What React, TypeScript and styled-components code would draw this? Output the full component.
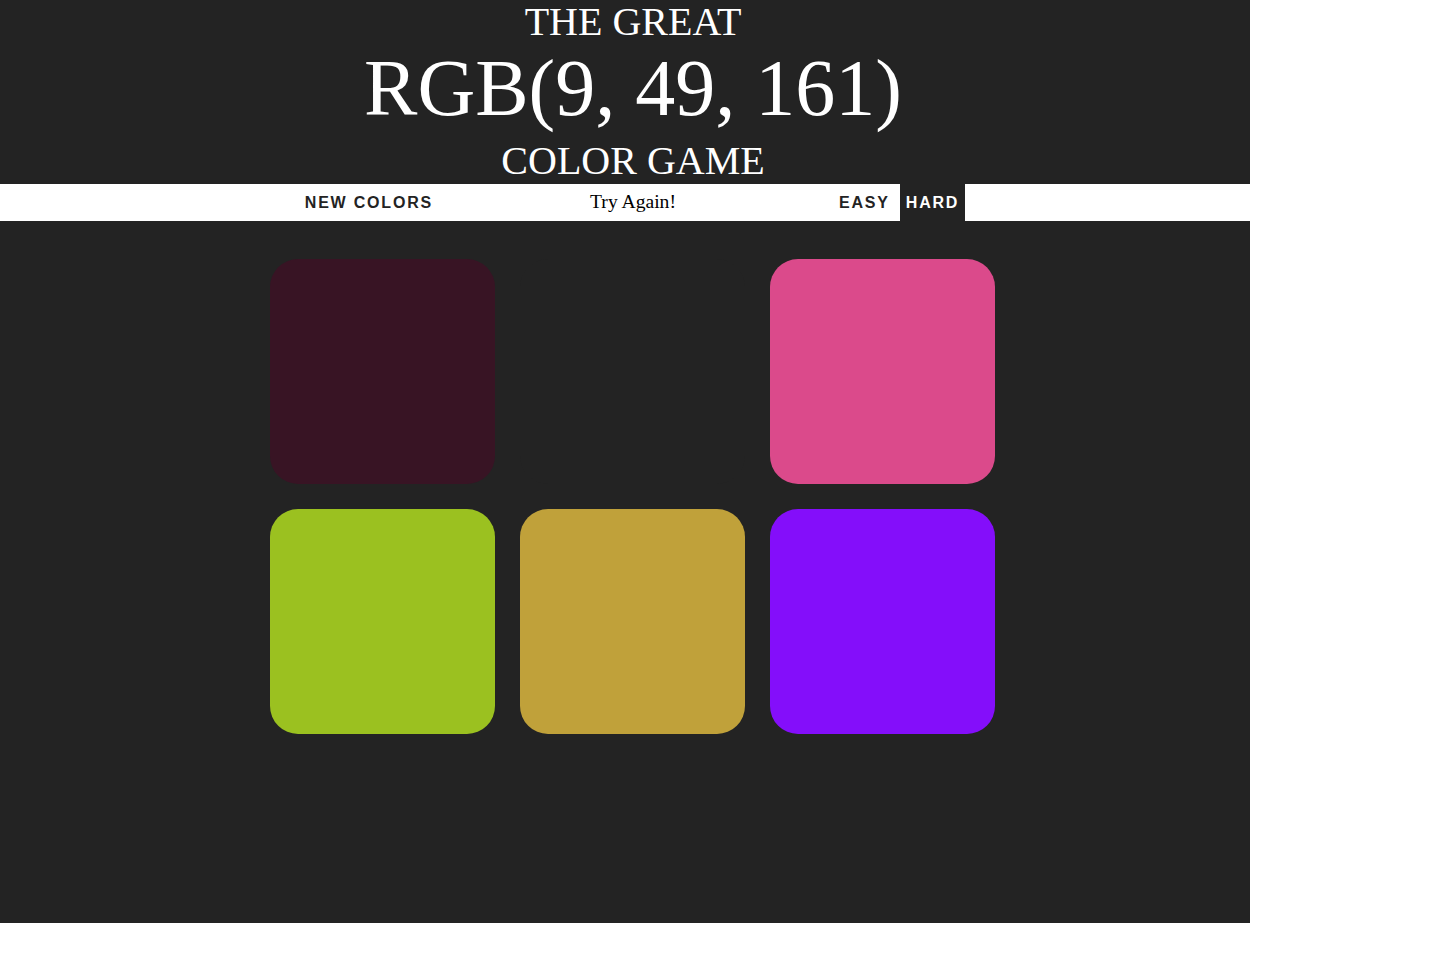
import React from 'react';
import styled, { createGlobalStyle } from 'styled-components';

const GlobalStyle = createGlobalStyle`
  html, body {
    margin: 0;
    padding: 0;
    background: #fff;
  }
`;

const squares: string[] = [
  'rgb(56, 20, 36)',
  '#232323',
  'rgb(219, 74, 139)',
  'rgb(155, 193, 32)',
  'rgb(192, 161, 58)',
  'rgb(132, 14, 250)',
];

const App = () => {
  return (
    <>
      <GlobalStyle />
      <Page>
        <Title>
          <TitleLine>THE GREAT</TitleLine>
          <ColorDisplay>RGB(9, 49, 161)</ColorDisplay>
          <TitleLine className="last">COLOR GAME</TitleLine>
        </Title>
        <Stripe>
          <Inner>
            <Button>New Colors</Button> <Message>Try Again!</Message>{' '}
            <Button>Easy</Button> <Button selected>Hard</Button>
          </Inner>
        </Stripe>
        <Container>
          {squares.map((color, i) => (
            <Square key={i} style={{ background: color }} />
          ))}
        </Container>
      </Page>
    </>
  );
};

const Page = styled.div`
  width: 1250px;
  height: 923px;
  background: #232323;
  overflow: hidden;
  font-family: 'Liberation Serif', 'Times New Roman', serif;
`;

const Title = styled.h1`
  margin: 0;
  padding: 0 0 1px 16px;
  font-weight: normal;
  color: #fff;
  text-align: center;
  font-size: 40px;
`;

const TitleLine = styled.div`
  line-height: 44px;
  &.last {
    margin-top: 7px;
  }
`;

const ColorDisplay = styled.div`
  font-size: 80px;
  line-height: 88px;
`;

const Stripe = styled.div`
  background: #fff;
  height: 37px;
`;

const Inner = styled.div`
  height: 100%;
  padding-left: 14px;
  text-align: center;
  font-size: 16px;
  line-height: 37px;
  color: #000;
`;

const Button = styled.button<{ selected?: boolean }>`
  height: 37px;
  padding: 0 6px;
  border: none;
  outline: none;
  vertical-align: top;
  font-family: 'Liberation Sans', Arial, sans-serif;
  font-size: 16px;
  font-weight: 700;
  letter-spacing: 1.8px;
  text-transform: uppercase;
  background: ${(p) => (p.selected ? '#232323' : '#fff')};
  color: ${(p) => (p.selected ? '#fff' : '#232323')};
`;

const Message = styled.span`
  display: inline-block;
  width: 380px;
  padding-right: 6px;
  font-size: 19.6px;
  line-height: 36px;
  vertical-align: top;
`;

const Container = styled.div`
  width: 750px;
  margin: 25px auto 0;
  padding-left: 14px;
  display: grid;
  grid-template-columns: repeat(3, 225px);
  gap: 25px;
  justify-content: center;
  padding-top: 13px;
`;

const Square = styled.div`
  width: 225px;
  height: 225px;
  border-radius: 28px;
`;

export default App;
